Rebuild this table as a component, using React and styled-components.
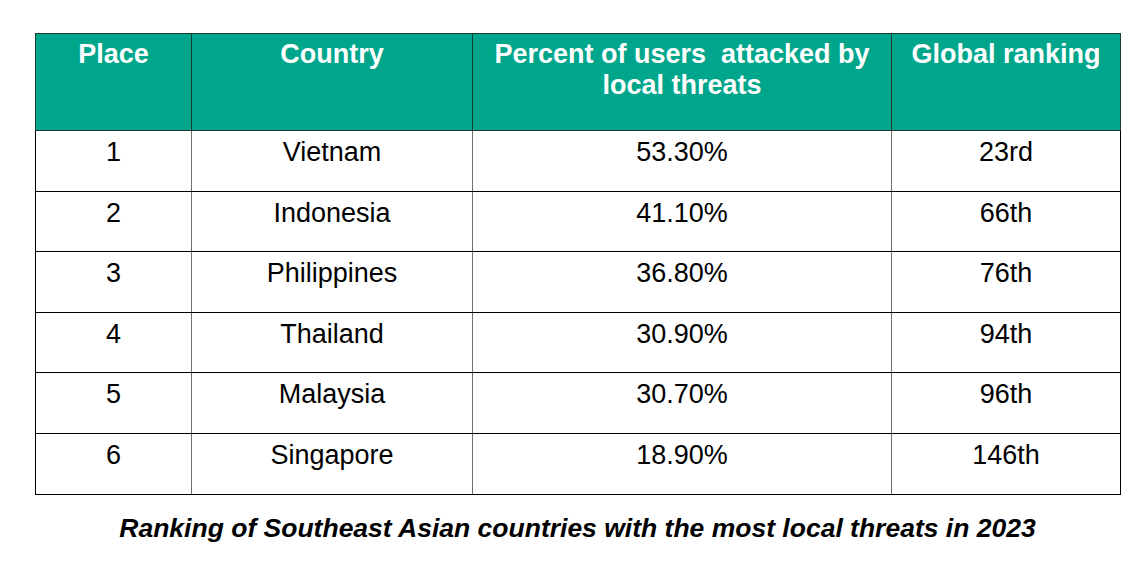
import * as React from 'react'
import styled, { createGlobalStyle } from 'styled-components'

const GlobalStyle = createGlobalStyle`
    html, body {
        margin: 0;
        padding: 0;
        background: #ffffff;
    }
    body {
        font-family: 'Liberation Sans', Arial, sans-serif;
        color: #000;
    }
`

const Page = styled.div`
    width: 1145px;
    height: 576px;
    box-sizing: border-box;
    padding: 33px 0 0 35px;
`

const Table = styled.table`
    width: 1085px;
    border-collapse: collapse;
    table-layout: fixed;
`

const HeadCell = styled.th`
    background: #00a68b;
    color: #ffffff;
    font-size: 27px;
    font-weight: bold;
    line-height: 31px;
    height: 97px;
    padding: 5px 6px 0;
    box-sizing: border-box;
    text-align: center;
    vertical-align: top;
    border: 1px solid #1d3a33;
`

const Cell = styled.td`
    font-size: 27px;
    line-height: 30px;
    height: 60.6px;
    padding: 6px 6px 0;
    box-sizing: border-box;
    text-align: center;
    vertical-align: top;
    border-top: 1px solid #000;
    border-bottom: 1px solid #000;
    border-left: 1px solid ${p => (p.$first ? '#000' : '#6f6f6f')};
    border-right: 1px solid ${p => (p.$last ? '#000' : '#6f6f6f')};
`

const Caption = styled.p`
    margin: 18px 0 0;
    width: 1085px;
    text-align: center;
    font-size: 26.5px;
    line-height: 30px;
    font-weight: bold;
    font-style: italic;
`

const columns = [
    { title: 'Place', width: 156 },
    { title: 'Country', width: 281 },
    { title: 'Percent of users\u00a0 attacked by local threats', width: 419 },
    { title: 'Global ranking', width: 229 },
]

const rows = [
    ['1', 'Vietnam', '53.30%', '23rd'],
    ['2', 'Indonesia', '41.10%', '66th'],
    ['3', 'Philippines', '36.80%', '76th'],
    ['4', 'Thailand', '30.90%', '94th'],
    ['5', 'Malaysia', '30.70%', '96th'],
    ['6', 'Singapore', '18.90%', '146th'],
]

const App = () => (
    <Page>
        <GlobalStyle />
        <Table>
            <colgroup>
                {columns.map(col => (
                    <col key={col.title} style={{ width: col.width }} />
                ))}
            </colgroup>
            <thead>
                <tr>
                    {columns.map(col => (
                        <HeadCell key={col.title}>{col.title}</HeadCell>
                    ))}
                </tr>
            </thead>
            <tbody>
                {rows.map(row => (
                    <tr key={row[0]}>
                        {row.map((value, i) => (
                            <Cell key={i} $first={i === 0} $last={i === row.length - 1}>
                                {value}
                            </Cell>
                        ))}
                    </tr>
                ))}
            </tbody>
        </Table>
        <Caption>Ranking of Southeast Asian countries with the most local threats in 2023</Caption>
    </Page>
)

export default App
